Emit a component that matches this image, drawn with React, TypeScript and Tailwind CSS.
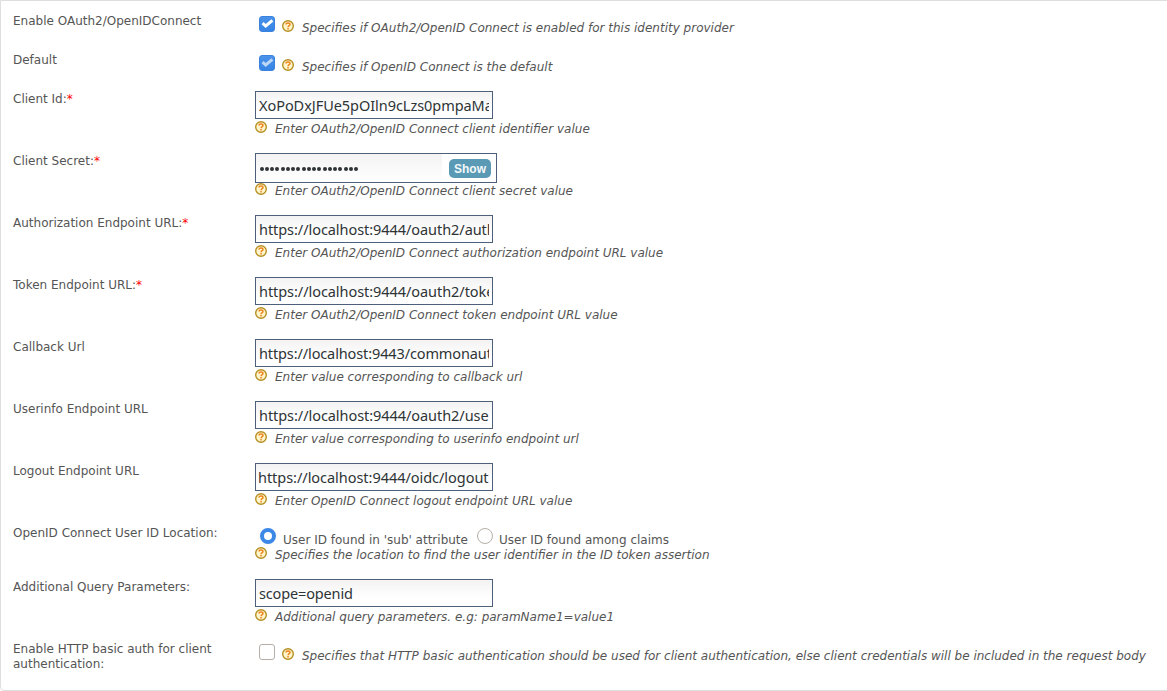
import type { ReactNode } from "react";

function HelpIcon() {
  return (
    <svg className="block size-3 shrink-0" viewBox="0 0 12 12" fill="none">
      <circle cx="6" cy="6" r="5.3" fill="#fff6cc" stroke="#b58f22" strokeWidth="1.4" />
      <path d="M4 4.600C4 3.300 4.900 2.900 6 2.900s2 .6 2 1.700C8 5.800 6.100 5.700 6.100 7.200" stroke="#ee8420" strokeWidth="1.5" />
      <path d="M5.300 8h1.500v1.400H5.300z" fill="#ee8420" />
    </svg>
  );
}

function Row({ label, required, height, children }: { label: string; required?: boolean; height: string; children: ReactNode }) {
  return (
    <div className={`flex ${height}`}>
      <div className="w-[242px] shrink-0 pt-px pr-6">
        {label}
        {required && <span className="text-[#ff0000]">*</span>}
      </div>
      <div className="grow">{children}</div>
    </div>
  );
}

function Help({ text }: { text: string }) {
  return (
    <div className="flex gap-2 whitespace-nowrap">
      <HelpIcon />
      <span className="pt-px italic">{text}</span>
    </div>
  );
}

function Check({ state }: { state: "on" | "dim" | "off" }) {
  if (state === "off") {
    return <div className="size-4 shrink-0 rounded-[3px] border border-[#b6afa9] bg-white" />;
  }
  return (
    <div className="size-4 shrink-0 rounded-[3px] border border-[#3a82dd] bg-linear-to-b from-[#4a92ea] to-[#3584e4]">
      <svg viewBox="0 0 14 14" className="block size-[14px]" fill="none">
        <path d="M2.600 6.200 5.700 9 12.400 3.300" stroke={state === "on" ? "#ffffff" : "#bcd6f6"} strokeWidth="3" />
      </svg>
    </div>
  );
}

function CheckRow({ label, state, text, height }: { label: string; state: "on" | "dim" | "off"; text: string; height: string }) {
  return (
    <Row label={label} height={height}>
      <div className="flex gap-[7px] pt-[3px] pl-1">
        <Check state={state} />
        <div className="pt-1">
          <Help text={text} />
        </div>
      </div>
    </Row>
  );
}

type Field = { label: string; required?: boolean; value: string; help: string; spacing: string };

function InputRow({ label, required, value, help, spacing }: Field) {
  return (
    <Row label={label} required={required} height="h-[62px]">
      <div className="h-7 w-[238px] border border-[#4c5f7b] bg-linear-to-b from-[#f3f3f3] to-white to-70% px-[3px]">
        <div className={`overflow-hidden whitespace-nowrap font-['Noto_Sans','Open_Sans',sans-serif] text-[14.5px] leading-[27px] text-[#2e3436] ${spacing}`}>
          {value}
        </div>
      </div>
      <div className="pt-0.5">
        <Help text={help} />
      </div>
    </Row>
  );
}

const endpoints: Field[] = [
  { label: "Authorization Endpoint URL:", required: true, value: "https://localhost:9444/oauth2/auth", help: "Enter OAuth2/OpenID Connect authorization endpoint URL value", spacing: "tracking-[-0.06px]" },
  { label: "Token Endpoint URL:", required: true, value: "https://localhost:9444/oauth2/toke", help: "Enter OAuth2/OpenID Connect token endpoint URL value", spacing: "tracking-[-0.06px]" },
  { label: "Callback Url", value: "https://localhost:9443/commonaut", help: "Enter value corresponding to callback url", spacing: "tracking-[-0.12px]" },
  { label: "Userinfo Endpoint URL", value: "https://localhost:9444/oauth2/use", help: "Enter value corresponding to userinfo endpoint url", spacing: "tracking-[-0.06px]" },
  { label: "Logout Endpoint URL", value: "https://localhost:9444/oidc/logout", help: "Enter OpenID Connect logout endpoint URL value", spacing: "tracking-[-0.04px] -ml-px" },
];

export default function App() {
  return (
    <div className="h-[691px] w-[1167px] overflow-hidden bg-white">
      <div className="h-[691px] w-[1175px] rounded-bl-[4px] border border-[#dedede] pt-3 pl-3 font-['DejaVu_Sans',sans-serif] text-[12px] leading-[15px] text-[#555555]">
        <CheckRow label="Enable OAuth2/OpenIDConnect" state="on" text="Specifies if OAuth2/OpenID Connect is enabled for this identity provider" height="h-[39px]" />
        <CheckRow label="Default" state="dim" text="Specifies if OpenID Connect is the default" height="h-[39px]" />
        <InputRow label="Client Id:" required value="XoPoDxJFUe5pOIln9cLzs0pmpaMa" help="Enter OAuth2/OpenID Connect client identifier value" spacing="tracking-[-0.05px]" />
        <Row label="Client Secret:" required height="h-[62px]">
          <div className="flex h-[30px] w-[242px] justify-between border border-[#4c5f7b] bg-white pr-[5px]">
            <div className="flex h-7 w-[186px] items-center gap-[1.28px] bg-linear-to-b from-[#f3f3f3] to-white pt-px pl-[3.5px]">
              {Array.from({ length: 19 }, (_, i) => (
                <span key={i} className="size-1 rounded-full bg-[#2e3436]" />
              ))}
            </div>
            <div className="mt-[5px] h-[19px] w-[42px] rounded-[5px] bg-[#5a9ab5] text-center font-['Liberation_Sans',sans-serif] text-[12px] leading-[20px] font-bold text-[#f4f8fa]">
              Show
            </div>
          </div>
          <Help text="Enter OAuth2/OpenID Connect client secret value" />
        </Row>
        {endpoints.map((field) => (
          <InputRow key={field.label} {...field} />
        ))}
        <Row label="OpenID Connect User ID Location:" height="h-[54px]">
          <div className="flex h-[22px] whitespace-nowrap pt-[3px] pl-[5px]">
            <div className="size-4 shrink-0 rounded-full border-4 border-[#3b88e7] bg-white" />
            <span className="w-[201px] shrink-0 pt-[5px] pl-[7px]">User ID found in 'sub' attribute</span>
            <div className="size-4 shrink-0 rounded-full border border-[#b6afa9] bg-white" />
            <span className="pt-[5px] pl-1.5">User ID found among claims</span>
          </div>
          <Help text="Specifies the location to find the user identifier in the ID token assertion" />
        </Row>
        <InputRow label="Additional Query Parameters:" value="scope=openid" help="Additional query parameters. e.g: paramName1=value1" spacing="tracking-[-0.15px]" />
        <CheckRow label="Enable HTTP basic auth for client authentication:" state="off" text="Specifies that HTTP basic authentication should be used for client authentication, else client credentials will be included in the request body" height="h-[40px]" />
      </div>
    </div>
  );
}
